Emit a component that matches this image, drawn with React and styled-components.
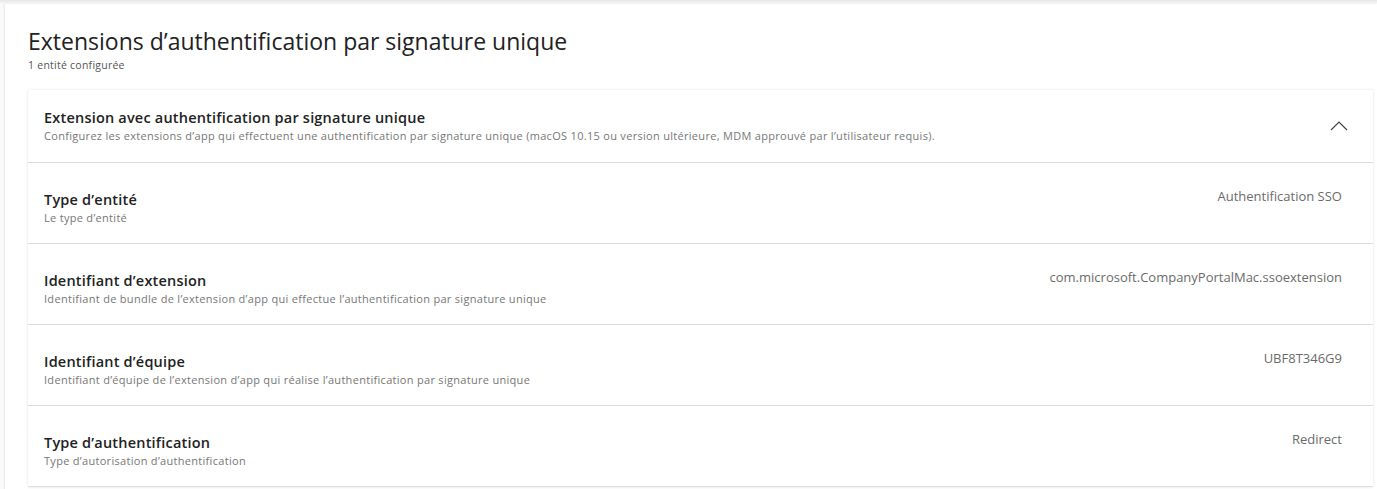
import React from 'react';
import styled, { createGlobalStyle } from 'styled-components';

const GlobalStyle = createGlobalStyle`
  *, *::before, *::after {
    box-sizing: border-box;
  }
  html, body {
    margin: 0;
    padding: 0;
    background: #ffffff;
  }
  body {
    font-family: "Open Sans", Lato, Arial, sans-serif;
    color: #222222;
  }
`;

const rows = [
  {
    label: 'Type d’entité',
    desc: 'Le type d’entité',
    value: 'Authentification SSO',
  },
  {
    label: 'Identifiant d’extension',
    desc: 'Identifiant de bundle de l’extension d’app qui effectue l’authentification par signature unique',
    value: 'com.microsoft.CompanyPortalMac.ssoextension',
  },
  {
    label: 'Identifiant d’équipe',
    desc: 'Identifiant d’équipe de l’extension d’app qui réalise l’authentification par signature unique',
    value: 'UBF8T346G9',
  },
  {
    label: 'Type d’authentification',
    desc: 'Type d’autorisation d’authentification',
    value: 'Redirect',
  },
];

export default function App() {
  return (
    <>
      <GlobalStyle />
      <Page>
        <Panel>
          <Heading>Extensions d’authentification par signature unique</Heading>
          <Count>1 entité configurée</Count>
          <Card>
            <CardHeader>
              <div>
                <CardTitle>Extension avec authentification par signature unique</CardTitle>
                <Desc>
                  Configurez les extensions d’app qui effectuent une authentification par signature unique (macOS 10.15 ou version ultérieure, MDM approuvé par l’utilisateur requis).
                </Desc>
              </div>
              <Chevron width="18" height="10" viewBox="0 0 18 10">
                <path d="M1 9 L9 1 L17 9" fill="none" stroke="#444" strokeWidth="1.2" />
              </Chevron>
            </CardHeader>
            {rows.map((r) => (
              <Row key={r.label}>
                <div>
                  <Label>{r.label}</Label>
                  <Desc>{r.desc}</Desc>
                </div>
                <Value>{r.value}</Value>
              </Row>
            ))}
          </Card>
        </Panel>
      </Page>
    </>
  );
}

const Page = styled.div`
  height: 489px;
  overflow: hidden;
  padding-left: 5px;
  background: #fafafa;
  box-shadow: inset 0 4px 3px -2px #e6e6e6;
`;

const Panel = styled.div`
  height: 100%;
  margin-top: 4px;
  background: #ffffff;
  box-shadow: -1px 0 2px #e8e8e8;
  padding: 23px 4px 0 23px;
`;

const Heading = styled.h1`
  margin: 0;
  font-size: 23px;
  font-weight: 400;
  line-height: 28px;
  color: #222;
`;

const Count = styled.div`
  margin-top: 3px;
  font-size: 10.5px;
  letter-spacing: 0.25px;
  line-height: 14px;
  color: #555;
`;

const Card = styled.div`
  margin-top: 18px;
  background: #fff;
  box-shadow: 0 0 3px rgba(0, 0, 0, 0.12);
  border-radius: 2px;
`;

const CardHeader = styled.div`
  display: flex;
  align-items: center;
  justify-content: space-between;
  height: 73px;
  padding: 0 25px 0 16px;
  border-bottom: 1px solid #dcdcdc;
`;

const CardTitle = styled.div`
  font-size: 14.5px;
  font-weight: 600;
  letter-spacing: 0.2px;
  color: #222;
  line-height: 18px;
`;

const Desc = styled.div`
  margin-top: 2px;
  font-size: 11px;
  letter-spacing: 0.3px;
  color: #777;
  line-height: 14px;
`;

const Chevron = styled.svg`
  display: block;
`;

const Row = styled.div`
  display: flex;
  justify-content: space-between;
  height: 81px;
  padding: 28px 31px 0 16px;
  border-bottom: 1px solid #dcdcdc;
`;

const Label = styled.div`
  font-size: 14.5px;
  font-weight: 600;
  letter-spacing: 0.2px;
  color: #222;
  line-height: 18px;
`;

const Value = styled.div`
  margin-top: -4px;
  font-size: 13px;
  color: #6b6b6b;
`;
